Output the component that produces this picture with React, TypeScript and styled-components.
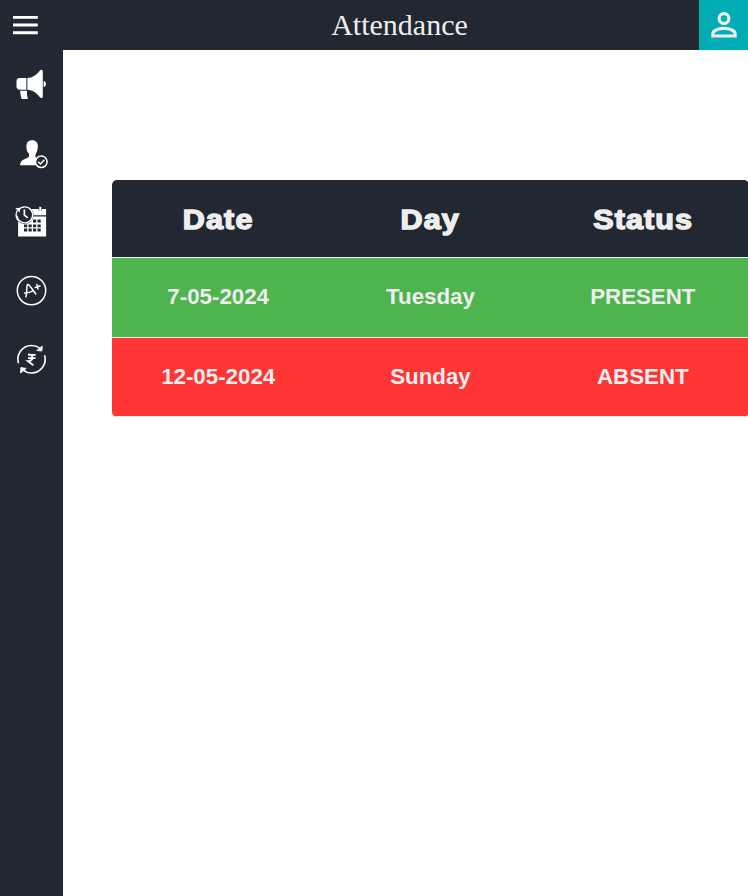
import React from "react";
import styled, { createGlobalStyle } from "styled-components";

const GlobalStyle = createGlobalStyle`
  * { box-sizing: border-box; }
  html, body { margin: 0; background: #fff; overflow: hidden; }
`;

const Page = styled.div`
  display: flex;
  flex-direction: column;
  height: 896px;
  overflow: hidden;
`;
const TopBar = styled.header`
  display: grid;
  grid-template-columns: 51px 1fr 49px;
  grid-template-rows: 50px;
  flex: 0 0 50px;
  background: #222831;
`;
const IconButton = styled.button<{ $accent?: boolean }>`
  display: flex;
  align-items: center;
  justify-content: center;
  padding: 0;
  border: 0;
  background: ${(p) => (p.$accent ? "#00adb5" : "transparent")};
`;
const Title = styled.h1`
  margin: 0;
  padding-left: 49px;
  text-align: center;
  font: 400 30px/50px "Liberation Serif", "Times New Roman", serif;
  color: #eee;
`;
const Body = styled.div`
  display: flex;
  flex: 1;
  min-height: 0;
`;
const Sidebar = styled.nav`
  display: flex;
  flex: 0 0 63px;
  flex-direction: column;
  align-items: center;
  gap: 20.8px;
  padding-top: 10px;
  background: #222831;
`;
const NavLink = styled.a`
  display: block;
  width: 48px;
  height: 48px;
`;
const Glyph = styled.svg`
  display: block;
`;
const Content = styled.main`
  flex: 1;
  min-width: 0;
  padding: 130px 0 0 49px;
`;
const Table = styled.div`
  width: 637px;
  border-radius: 5px;
  overflow: hidden;
`;
const Row = styled.div<{ $bg: string; $height: number }>`
  display: grid;
  grid-template-columns: repeat(3, 1fr);
  align-items: start;
  height: ${(p) => p.$height}px;
  border-bottom: 1px solid #eee;
  background: ${(p) => p.$bg};
`;
const Cell = styled.div`
  padding-top: 26px;
  text-align: center;
  font: 700 22.3px/26px "Liberation Sans", Arial, sans-serif;
  color: #eee;
`;
const HeadCell = styled(Cell)`
  padding-top: 24px;
  font-size: 27.5px;
  line-height: 32px;
  letter-spacing: 1px;
  transform: scaleX(1.11);
  -webkit-text-stroke: 1.4px #eee;
`;

const Icon = ({ children }: { children: React.ReactNode }) => (
  <NavLink>
    <Glyph width="48" height="48" viewBox="0 0 48 48" fill="none" stroke="none">
      {children}
    </Glyph>
  </NavLink>
);

const records = [
  { date: "7-05-2024", day: "Tuesday", status: "PRESENT", height: 80 },
  { date: "12-05-2024", day: "Sunday", status: "ABSENT", height: 79 },
];

export default function App() {
  return (
    <Page>
      <GlobalStyle />
      <TopBar>
        <IconButton aria-label="Menu">
          <Glyph width="51" height="50" viewBox="0 0 51 50" fill="#fff">
            <path d="M13 15.9h24.8v2.9H13zM13 23.6h24.8v2.9H13zM13 31.3h24.8v2.9H13z" />
          </Glyph>
        </IconButton>
        <Title>Attendance</Title>
        <IconButton $accent aria-label="Profile">
          <Glyph width="49" height="50" viewBox="0 0 49 50" fill="none" stroke="#eee" strokeWidth="3.2">
            <circle cx="25" cy="18.6" r="4.9" />
            <path d="M13.9 36v-2.5c0-3.4 6.5-5.1 11.1-5.1s11.1 1.7 11.1 5.1V36z" />
          </Glyph>
        </IconButton>
      </TopBar>
      <Body>
        <Sidebar>
          <Icon>
            <g fill="#fff">
              <path d="M18.4 18v11.8h-6.7c-2 0-3.2-1.3-3.2-3.2v-5.4c0-2 1.2-3.2 3.2-3.2z" />
              <path d="M19.4 18c5.2-.2 9.4-3.2 12.3-7.3 1.2-1.6 3.1-1.3 3.1.5v25.3c0 1.8-1.9 2.1-3.1.5-2.9-4-7.1-7-12.3-7.2z" />
              <path d="M12 30.8h7c-.2 2.6 0 5 .6 6.6.6 1 .2 1.7-.9 1.7h-3.7c-1 0-1.6-.4-1.8-1.4z" />
              <path d="M35.6 21c3.2.4 3.2 5.6 0 6z" />
            </g>
          </Icon>
          <Icon>
            <path fill="#fff" d="M24 11.3c3.8 0 6.1 2.6 5.8 6.3-.1 3.5-1.1 5.8-2.3 7.6v2.4c0 1 1 1.6 1.8 2.1-1.8 1.7-2.1 4.4-1 6.5H12.1c.2-4.2 2.7-5.6 6-6.8 2.1-.7 2.9-1.2 2.9-2.3v-2.4c-1.6-1.4-2.4-3.3-2.5-5.7-.5-4.3.9-7.7 5.5-7.7z" />
            <circle cx="33.3" cy="32.8" r="5.8" stroke="#fff" strokeWidth="1.5" />
            <path d="m30.2 32.8 2.2 2.1 4-4.2" stroke="#fff" strokeWidth="1.4" />
          </Icon>
          <Icon>
            <path fill="#fff" d="M10.1 19v19.4h28V18.6H24zM22 10.9h8.8v2.2h2.8v-2.2h4.5v6.3H24z" />
            <path d="M31.3 8.8h2v4.6h-2z" fill="#fff" />
            <circle cx="16.7" cy="17" r="8.9" fill="#222831" />
            <path d="M10.7 11.8a7.9 7.9 0 1 1-1.8 5.8M10 22.6c-2.6-3.2-2.4-7.6-.6-10.2" stroke="#fff" strokeWidth="1.3" />
            <path d="m7.4 10.2 4.8-.4-.6 4.8z" fill="#fff" />
            <path d="M16.4 11.6v5.6l3.4 2.7" stroke="#fff" strokeWidth="1.7" />
            <g fill="#222831">
              <path d="M25 21.6h3.2v3H25zM29.5 21.6h3.2v3h-3.2zM16 26.4h3.2v2.8H16zM20.5 26.4h3.2v2.8h-3.2zM25 26.4h3.2v2.8H25zM29.5 26.4h3.2v2.8h-3.2zM16 30.4h3.2v3H16zM20.5 30.4h3.2v3h-3.2zM25 30.4h3.2v3H25zM29.5 30.4h3.2v3h-3.2z" />
            </g>
          </Icon>
          <Icon>
            <g stroke="#fff" strokeWidth="1.5" strokeLinecap="round" strokeLinejoin="round">
              <circle cx="23.5" cy="24.6" r="14.2" />
              <path d="M17.9 30.7c.8-3.1.9-8 1.2-11.2.1-1.3 1-1.3 1.8-.5 2.5 2.4 4.6 6.4 6.9 9M16.6 26.9c3.2.6 6.2-.7 8.9-2.2M27.2 21.5l4.8-1.5M28.8 18.4l1.2 4.6" />
            </g>
          </Icon>
          <Icon>
            <g stroke="#fff" strokeWidth="1.6">
              <path d="M10.5 28.3C7.9 19.7 13.9 10.6 23.5 10.5c3 0 5.7.8 8.1 2.4M36.6 20.3c2.6 8.5-3.6 17.6-12.9 17.7-3.2 0-6.2-1.1-8.5-3" />
              <path d="M20 19.8h7.6M20 23.1h7.6M20 19.5c5.6-.2 6.1 6.6 0 6.6l5.4 4.1" strokeWidth="1.8" />
            </g>
            <path d="m34.3 11.1-.4 4.9-5.2-.5zM12.6 38.1l.2-5.6 5.4.9z" fill="#fff" stroke="#fff" strokeWidth=".8" />
          </Icon>
        </Sidebar>
        <Content>
          <Table role="table">
            <Row role="row" $bg="#222831" $height={78}>
              {["Date", "Day", "Status"].map((label) => (
                <HeadCell role="columnheader" key={label}>{label}</HeadCell>
              ))}
            </Row>
            {records.map((r) => (
              <Row role="row" key={r.date} $height={r.height} $bg={r.status === "PRESENT" ? "#4eb44e" : "#ff3434"}>
                <Cell role="cell">{r.date}</Cell>
                <Cell role="cell">{r.day}</Cell>
                <Cell role="cell">{r.status}</Cell>
              </Row>
            ))}
          </Table>
        </Content>
      </Body>
    </Page>
  );
}
